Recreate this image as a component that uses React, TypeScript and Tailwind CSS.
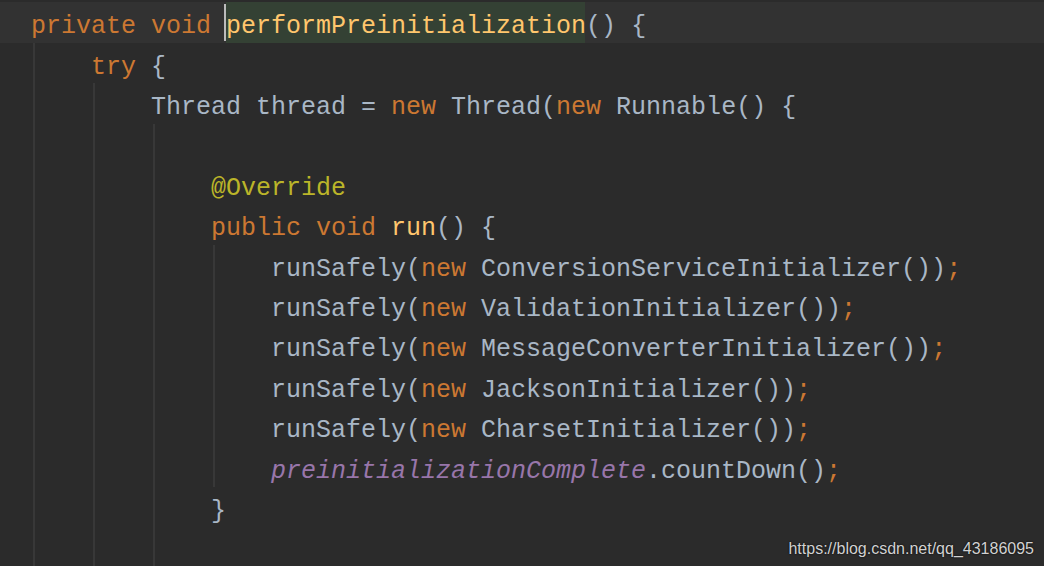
type Tok = [string, string]

const kw = "text-[#cc7832]"
const txt = "text-[#a9b7c6]"

function Line({ toks }: { toks: Tok[] }) {
  return (
    <div className="h-[40.4px] pt-[8px] whitespace-pre flex items-center">
      {toks.map(([c, t], i) => (
        <span key={i} className={c}>
          {t}
        </span>
      ))}
    </div>
  )
}

function Block({ children, className = "" }: { children: React.ReactNode; className?: string }) {
  return <div className={`ml-[2px] border-l-2 border-[#383838] pl-[56px] ${className}`}>{children}</div>
}

const run = (name: string, last = ";"): Tok[] => [
  [txt, "runSafely("],
  [kw, "new "],
  [txt, name + "())"],
  [kw, last],
]

export default function App() {
  return (
    <div
      className="relative w-[1044px] h-[566px] overflow-hidden bg-[#2b2b2b] text-[25px] leading-none"
      style={{ fontFamily: '"Liberation Mono", "DejaVu Sans Mono", monospace' }}
    >
      {/* caret row */}
      <div className="absolute left-0 right-0 top-[2px] h-[41px] bg-[#323232]" />
      <div className="absolute left-[226px] top-[2px] h-[41px] w-[359px] bg-[#344134]" />
      <div className="absolute left-[224px] top-[4px] h-[37px] w-[2px] bg-[#bbbbbb]" />

      <div className="relative pt-[2px] pl-[31px]">
        <div className="h-[41px] pt-[8px] whitespace-pre flex items-center">
          <span className={kw}>private void </span>
          <span className="text-[#ffc66d]">performPreinitialization</span>
          <span className={txt}>() {"{"}</span>
        </div>
        <Block className="h-[600px]">
          <Line toks={[[kw, "try "], [txt, "{"]]} />
          <Block className="h-[600px]">
            <Line
              toks={[
                [txt, "Thread thread = "],
                [kw, "new "],
                [txt, "Thread("],
                [kw, "new "],
                [txt, "Runnable() {"],
              ]}
            />
            <Block className="h-[600px]">
              <Line toks={[[txt, " "]]} />
              <Line toks={[["text-[#bbb529]", "@Override"]]} />
              <Line toks={[[kw, "public void "], ["text-[#ffc66d]", "run"], [txt, "() {"]]} />
              <Block>
                <Line toks={run("ConversionServiceInitializer")} />
                <Line toks={run("ValidationInitializer")} />
                <Line toks={run("MessageConverterInitializer")} />
                <Line toks={run("JacksonInitializer")} />
                <Line toks={run("CharsetInitializer")} />
                <Line
                  toks={[
                    ["text-[#9876aa] italic", "preinitializationComplete"],
                    [txt, ".countDown()"],
                    [kw, ";"],
                  ]}
                />
              </Block>
              <Line toks={[[txt, "}"]]} />
            </Block>
          </Block>
        </Block>
      </div>

      <div
        className="absolute right-[10px] bottom-[9px] text-[16px] text-[#d2d2d2] [text-shadow:0_0_2px_#000]"
        style={{ fontFamily: '"Liberation Sans", Arial, sans-serif' }}
      >
        https://blog.csdn.net/qq_43186095
      </div>
    </div>
  )
}
